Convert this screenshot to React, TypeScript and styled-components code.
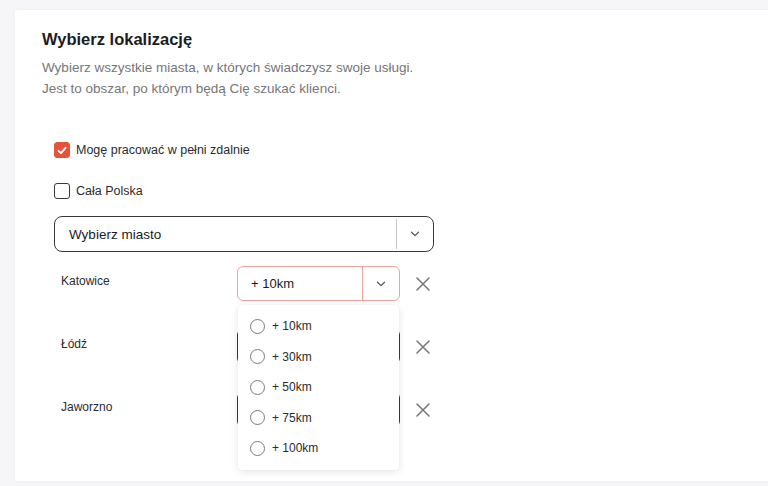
import React, { FC, useState } from 'react';
import styled, { createGlobalStyle } from 'styled-components';

const GlobalStyle = createGlobalStyle`
  html, body {
    margin: 0;
    padding: 0;
    background: #f6f6f8;
    overflow: hidden;
  }
  body {
    font-family: 'Liberation Sans', Arial, sans-serif;
    -webkit-font-smoothing: antialiased;
  }
`;

const Page = styled.div`
  height: 486px;
  padding: 10px 0 5px 15px;
  box-sizing: border-box;
  display: flex;
`;

const Card = styled.section`
  flex: 1;
  margin-right: -20px;
  background: #fff;
  box-shadow: 0 0 4px rgba(0, 0, 0, 0.04);
  padding: 18px 0 0 27px;
`;

const Title = styled.h2`
  margin: 0;
  font-size: 16.5px;
  line-height: 22px;
  font-weight: 700;
  color: #1c1c1e;
`;

const Subtitle = styled.p`
  margin: 7px 0 0;
  font-size: 13.5px;
  line-height: 21px;
  color: #76767a;
`;

const Form = styled.div`
  width: 380px;
  margin: 41px 0 0 12px;
  display: flex;
  flex-direction: column;
`;

const CheckRow = styled.label`
  display: flex;
  align-items: center;
  gap: 6px;
  height: 20px;
  font-size: 12.5px;
  color: #2b2b2e;
  & + & {
    margin-top: 21px;
  }
`;

const Box = styled.span<{ $checked: boolean }>`
  width: 16px;
  height: 16px;
  box-sizing: border-box;
  border-radius: 3px;
  border: 1.5px solid ${(p) => (p.$checked ? '#e5533d' : '#3a3a3c')};
  background: ${(p) => (p.$checked ? '#e5533d' : '#fff')};
  display: flex;
  align-items: center;
  justify-content: center;
`;

const Select = styled.div<{ $variant: 'main' | 'active' | 'plain' }>`
  display: flex;
  align-items: stretch;
  box-sizing: border-box;
  background: #fff;
  height: ${(p) => (p.$variant === 'main' ? '36px' : '35px')};
  border-radius: ${(p) => (p.$variant === 'main' ? '8px' : '6px')};
  border: ${(p) =>
    p.$variant === 'active' ? '1px solid #e9a69c' : '1.5px solid #3a3a3c'};
`;

const SelectValue = styled.div<{ $big?: boolean }>`
  flex: 1;
  display: flex;
  align-items: center;
  padding-left: ${(p) => (p.$big ? '14px' : '13px')};
  font-size: ${(p) => (p.$big ? '13.5px' : '13px')};
  color: #1c1c1e;
`;

const SelectToggle = styled.div<{ $accent?: boolean }>`
  width: 36px;
  display: flex;
  align-items: center;
  justify-content: center;
  border-left: 1px solid ${(p) => (p.$accent ? '#e9a69c' : '#c9c9cc')};
  margin: ${(p) => (p.$accent ? '0' : '2px 0')};
  color: #555;
`;

const MainSelect = styled(Select)`
  margin-top: 15px;
`;

const Cities = styled.div`
  margin-top: 14px;
  display: flex;
  flex-direction: column;
  gap: 28px;
`;

const CityRow = styled.div`
  display: grid;
  grid-template-columns: 176px 163px 30px;
  align-items: start;
  padding-left: 7px;
`;

const CityName = styled.div`
  font-size: 12px;
  line-height: 18px;
  margin-top: 6px;
  color: #2b2b2e;
`;

const SelectWrap = styled.div`
  position: relative;
`;

const Remove = styled.button`
  height: 35px;
  border: 0;
  background: none;
  padding: 0 0 0 16px;
  display: flex;
  align-items: center;
  color: #7a7a7e;
  cursor: pointer;
`;

const Menu = styled.ul`
  position: absolute;
  z-index: 10;
  top: 39px;
  left: 1px;
  right: 1px;
  margin: 0;
  padding: 6px 0;
  list-style: none;
  background: #fff;
  border-radius: 4px;
  box-shadow: 0 2px 8px rgba(0, 0, 0, 0.1), 0 0 1px rgba(0, 0, 0, 0.08);
`;

const Option = styled.li`
  height: 30.5px;
  display: flex;
  align-items: center;
  gap: 7px;
  padding-left: 12px;
  font-size: 12px;
  color: #2b2b2e;
`;

const Radio = styled.span`
  width: 15px;
  height: 15px;
  box-sizing: border-box;
  border-radius: 50%;
  border: 1.5px solid #7a7a7e;
`;

const Chevron: FC = () => (
  <svg width="10" height="6" viewBox="0 0 10 6" fill="none">
    <path d="M1.5 1.2 5 4.6 8.5 1.2" stroke="currentColor" strokeWidth="1.2" strokeLinecap="round" strokeLinejoin="round" />
  </svg>
);

const Cross: FC = () => (
  <svg width="14" height="14" viewBox="0 0 14 14" fill="none">
    <path d="M1 1l12 12M13 1 1 13" stroke="currentColor" strokeWidth="1.6" strokeLinecap="round" />
  </svg>
);

const Check: FC = () => (
  <svg width="10" height="9" viewBox="0 0 10 9" fill="none">
    <path d="M1.5 4.8 4 7.2 8.5 1.8" stroke="#fff" strokeWidth="1.8" strokeLinecap="round" strokeLinejoin="round" />
  </svg>
);

const radiusOptions = ['+ 10km', '+ 30km', '+ 50km', '+ 75km', '+ 100km'];
const cities = ['Katowice', 'Łódź', 'Jaworzno'];

const App: FC = () => {
  const [remote, setRemote] = useState(true);
  const [poland, setPoland] = useState(false);

  return (
    <>
      <GlobalStyle />
      <Page>
        <Card>
          <Title>Wybierz lokalizację</Title>
          <Subtitle>
            Wybierz wszystkie miasta, w których świadczysz swoje usługi.
            <br />
            Jest to obszar, po którym będą Cię szukać klienci.
          </Subtitle>
          <Form>
            <CheckRow onClick={() => setRemote(!remote)}>
              <Box $checked={remote}>{remote && <Check />}</Box>
              Mogę pracować w pełni zdalnie
            </CheckRow>
            <CheckRow onClick={() => setPoland(!poland)}>
              <Box $checked={poland}>{poland && <Check />}</Box>
              Cała Polska
            </CheckRow>
            <MainSelect $variant="main">
              <SelectValue $big>Wybierz miasto</SelectValue>
              <SelectToggle>
                <Chevron />
              </SelectToggle>
            </MainSelect>
            <Cities>
              {cities.map((city, i) => (
                <CityRow key={city}>
                  <CityName>{city}</CityName>
                  <SelectWrap>
                    <Select $variant={i === 0 ? 'active' : 'plain'}>
                      {/* the lower selects sit under the open menu */}
                      <SelectValue>{i === 0 ? '+ 10km' : ''}</SelectValue>
                      <SelectToggle $accent={i === 0}>
                        <Chevron />
                      </SelectToggle>
                    </Select>
                    {i === 0 && (
                      <Menu>
                        {radiusOptions.map((opt) => (
                          <Option key={opt}>
                            <Radio />
                            {opt}
                          </Option>
                        ))}
                      </Menu>
                    )}
                  </SelectWrap>
                  <Remove aria-label="Usuń">
                    <Cross />
                  </Remove>
                </CityRow>
              ))}
            </Cities>
          </Form>
        </Card>
      </Page>
    </>
  );
};

export default App;
